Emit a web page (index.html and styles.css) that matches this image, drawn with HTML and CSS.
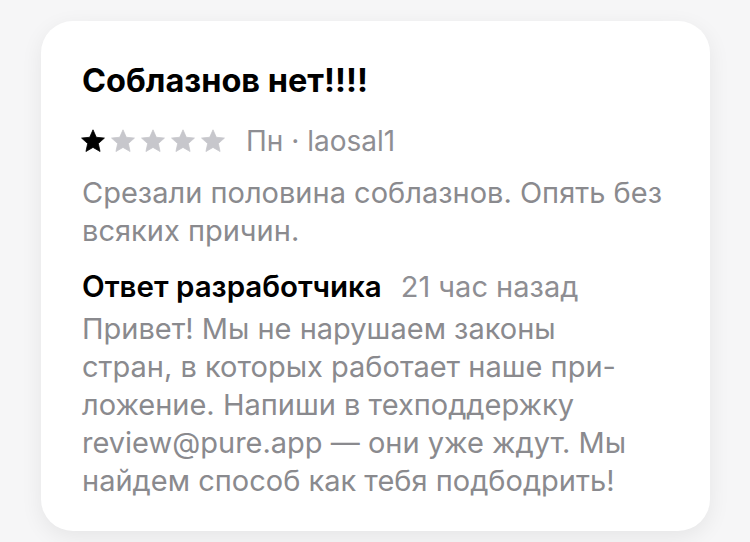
FILE: index.html
```html
<!DOCTYPE html>
<html lang="ru">
<head>
<meta charset="utf-8">
<title>Отзыв</title>
<link rel="stylesheet" href="styles.css">
</head>
<body>
<div class="card">
  <h1 class="title">Соблазнов нет!!!!</h1>
  <div class="rating-row">
    <div class="stars">
      <svg class="star star-on" viewBox="0 0 24 24"><polygon points="12,0.8 15.29,8.27 23.41,9.09 17.33,14.53 19.05,22.51 12,18.4 4.95,22.51 6.67,14.53 0.59,9.09 8.71,8.27"/></svg>
      <svg class="star" viewBox="0 0 24 24"><polygon points="12,0.8 15.29,8.27 23.41,9.09 17.33,14.53 19.05,22.51 12,18.4 4.95,22.51 6.67,14.53 0.59,9.09 8.71,8.27"/></svg>
      <svg class="star" viewBox="0 0 24 24"><polygon points="12,0.8 15.29,8.27 23.41,9.09 17.33,14.53 19.05,22.51 12,18.4 4.95,22.51 6.67,14.53 0.59,9.09 8.71,8.27"/></svg>
      <svg class="star" viewBox="0 0 24 24"><polygon points="12,0.8 15.29,8.27 23.41,9.09 17.33,14.53 19.05,22.51 12,18.4 4.95,22.51 6.67,14.53 0.59,9.09 8.71,8.27"/></svg>
      <svg class="star" viewBox="0 0 24 24"><polygon points="12,0.8 15.29,8.27 23.41,9.09 17.33,14.53 19.05,22.51 12,18.4 4.95,22.51 6.67,14.53 0.59,9.09 8.71,8.27"/></svg>
    </div>
    <span class="meta">Пн · laosal1</span>
  </div>
  <p class="body-text">Срезали половина соблазнов. Опять без<br>всяких причин.</p>
  <div class="reply-head">
    <span class="reply-title">Ответ разработчика</span>
    <span class="reply-date">21 час назад</span>
  </div>
  <p class="body-text reply-text">Привет! Мы не нарушаем законы<br>стран, в которых работает наше при-<br>ложение. Напиши в техподдержку<br>review@pure.app — они уже ждут. Мы<br>найдем способ как тебя подбодрить!</p>
</div>
</body>
</html>
```
FILE: styles.css
```css
html, body {
  margin: 0;
  padding: 0;
  background: #f6f6f7;
}
body {
  width: 750px;
  height: 542px;
  overflow: hidden;
  font-family: Inter, Roboto, "Liberation Sans", sans-serif;
}
.card {
  box-sizing: border-box;
  margin: 21px 0 0 41px;
  width: 669px;
  height: 510px;
  background: #ffffff;
  border-radius: 32px;
  box-shadow: 0 6px 22px rgba(0, 0, 0, 0.07);
  padding: 42px 10px 0 41px;
  display: flex;
  flex-direction: column;
}
.title {
  margin: 0;
  font-size: 32.5px;
  line-height: 36px;
  font-weight: 700;
  color: #000;
}
.rating-row {
  margin-top: 27px;
  height: 30px;
  display: flex;
  align-items: center;
}
.stars {
  display: flex;
  gap: 6px;
  margin-left: -1px;
}
.star {
  width: 24px;
  height: 24px;
  fill: #c7c7cc;
  stroke: #c7c7cc;
  stroke-width: 0.8;
  stroke-linejoin: round;
}
.star-on {
  fill: #000;
  stroke: #000;
}
.meta {
  margin-left: 21px;
  font-size: 28px;
  line-height: 30px;
  color: #8e8e93;
}
.body-text {
  margin: 18px 0 0 0;
  font-size: 29px;
  line-height: 37.5px;
  color: #8a8a8e;
}
.reply-head {
  margin-top: 19px;
  display: flex;
  align-items: baseline;
  gap: 19px;
  font-size: 29px;
  line-height: 37px;
}
.reply-title {
  font-size: 29.5px;
  font-weight: 600;
  color: #000;
}
.reply-date {
  color: #8e8e93;
}
.reply-text {
  margin-top: 5px;
  line-height: 38px;
}
```
